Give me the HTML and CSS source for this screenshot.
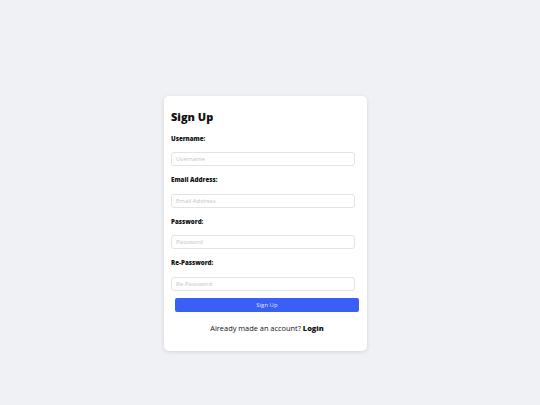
FILE: index.html
```html
<!DOCTYPE html>
<html lang="en">
<head>
<meta charset="utf-8">
<title>Sign Up</title>
<link rel="stylesheet" href="styles.css">
</head>
<body>
<div class="card">
  <h1 class="title">Sign Up</h1>
  <form class="form">
    <label class="label" for="u">Username:</label>
    <input class="input" id="u" type="text" placeholder="Username">
    <label class="label" for="e">Email Address:</label>
    <input class="input" id="e" type="email" placeholder="Email Address">
    <label class="label" for="p">Password:</label>
    <input class="input" id="p" type="password" placeholder="Password">
    <label class="label" for="r">Re-Password:</label>
    <input class="input input-last" id="r" type="password" placeholder="Re-Password">
    <button class="btn" type="button">Sign Up</button>
  </form>
  <p class="footer">Already made an account? <b class="login">Login</b></p>
</div>
</body>
</html>
```
FILE: styles.css
```css
html, body {
  margin: 0;
  padding: 0;
  background: #f0f1f5;
  width: 540px;
  height: 405px;
  overflow: hidden;
  font-family: "Open Sans", "DejaVu Sans", sans-serif;
}
.card {
  margin: 96px 0 0 164px;
  width: 203px;
  height: 255px;
  box-sizing: border-box;
  padding: 13px 12px 0 7px;
  background: #ffffff;
  border-radius: 5px;
  box-shadow: 0 1px 4px rgba(0, 0, 0, 0.12);
}
.title {
  margin: 0 0 8.5px;
  font-size: 11px;
  line-height: 16px;
  font-weight: 800;
  color: #111;
}
.form {
  display: flex;
  flex-direction: column;
}
.label {
  font-size: 6.2px;
  line-height: 10px;
  font-weight: 800;
  color: #111;
  margin-bottom: 8.5px;
}
.input {
  width: 184px;
  height: 14px;
  box-sizing: border-box;
  margin: 0 0 9px;
  padding: 0 4px;
  border: 1px solid #e3e3e3;
  border-radius: 3px;
  font-family: inherit;
  font-size: 6px;
  outline: none;
}
.input-last {
  margin-bottom: 7px;
}
.input::placeholder {
  color: #c4c4c4;
}
.btn {
  margin: 0 0 0 4px;
  width: 184px;
  height: 14px;
  box-sizing: border-box;
  border: none;
  border-radius: 2px;
  background: #3a5ff6;
  color: #dfe5ff;
  font-family: inherit;
  font-size: 6px;
  padding: 0;
}
.footer {
  margin: 11px 0 0;
  text-align: center;
  padding-left: 8px;
  font-size: 7.4px;
  line-height: 10px;
  color: #111;
}
.login {
  font-weight: 800;
}
```
